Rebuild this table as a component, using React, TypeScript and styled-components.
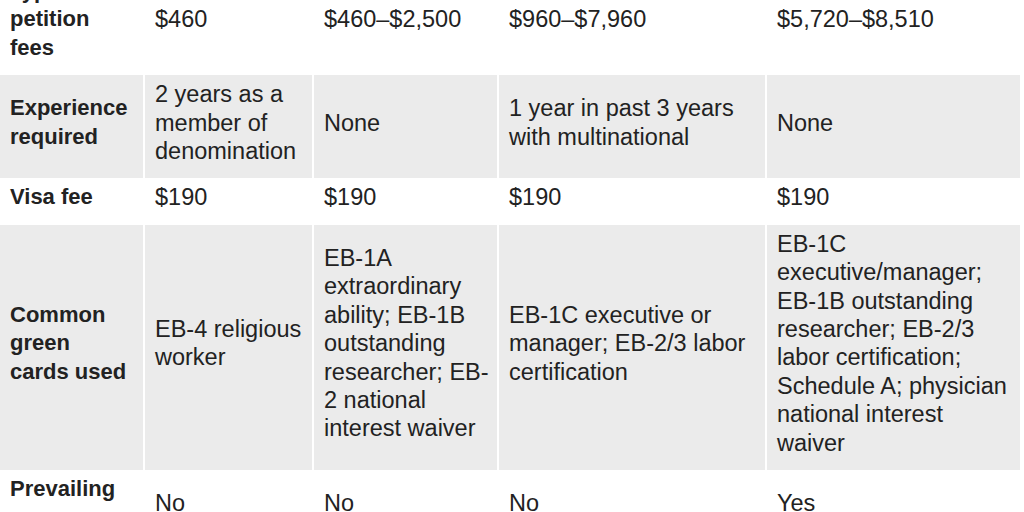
import React from "react";
import styled, { createGlobalStyle } from "styled-components";

const GlobalStyle = createGlobalStyle`
  * { box-sizing: border-box; }
  html, body { margin: 0; padding: 0; background: #ffffff; }
  body { overflow: hidden; }
`;

const Table = styled.div`
  width: 1020px;
  margin-top: -28px;
  font-family: "Liberation Sans", Arial, sans-serif;
  color: #222222;
`;

const Row = styled.div`
  display: grid;
  grid-template-columns: 143px 167px 183px 266px 253px;
  column-gap: 2px;
`;

const Cell = styled.div<{ $shaded?: boolean }>`
  display: flex;
  align-items: center;
  padding: 5px 6px 13px 10px;
  background: ${(p) => (p.$shaded ? "#ebebeb" : "transparent")};
  font-size: 23.5px;
  line-height: 28.4px;
  font-weight: 400;
`;

const Label = styled(Cell)`
  font-size: 22px;
  font-weight: 700;
  padding-right: 10px;
`;

type RowData = { label: string; values: string[] };

const rows: RowData[] = [
  {
    label: "Typical petition fees",
    values: ["$460", "$460–$2,500", "$960–$7,960", "$5,720–$8,510"],
  },
  {
    label: "Experience required",
    values: [
      "2 years as a member of denomination",
      "None",
      "1 year in past 3 years with multinational",
      "None",
    ],
  },
  {
    label: "Visa fee",
    values: ["$190", "$190", "$190", "$190"],
  },
  {
    label: "Common green cards used",
    values: [
      "EB-4 religious worker",
      "EB-1A extraordinary ability; EB-1B outstanding researcher; EB-\u200B2 national interest waiver",
      "EB-1C executive or manager; EB-2/3 labor certification",
      "EB-1C executive/\u2060manager; EB-1B outstanding researcher; EB-2/3 labor certification; Schedule A; physician national interest waiver",
    ],
  },
  {
    label: "Prevailing wage",
    values: ["No", "No", "No", "Yes"],
  },
];

export default function App() {
  return (
    <>
      <GlobalStyle />
      <Table>
        {rows.map((r, i) => {
          const shaded = i % 2 === 1;
          return (
            <Row key={r.label}>
              <Label $shaded={shaded}>{r.label}</Label>
              {r.values.map((v, j) => (
                <Cell key={j} $shaded={shaded}>
                  {v}
                </Cell>
              ))}
            </Row>
          );
        })}
      </Table>
    </>
  );
}
